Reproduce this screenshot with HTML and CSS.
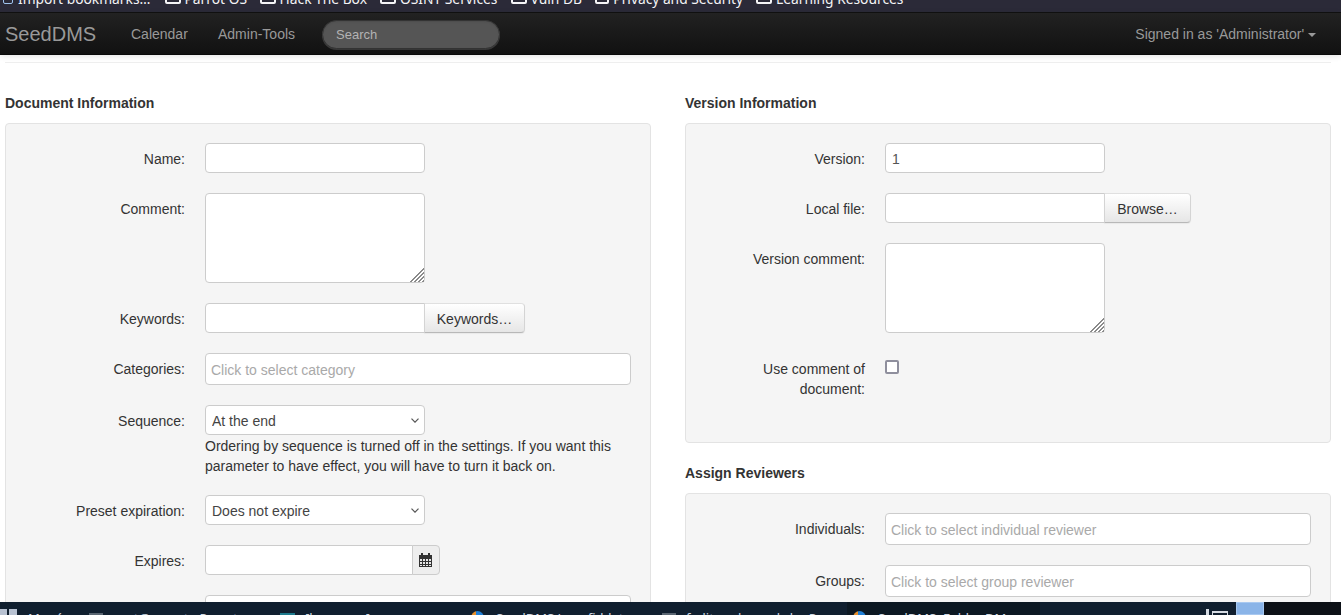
FILE: index.html
```html
<!DOCTYPE html>
<html>
<head>
    <title>SeedDMS</title>
    <link rel="stylesheet" href="styles.css">
</head>
<body>
    <!-- browser bookmarks, mostly scrolled off -->
    <div class="bookmarks">
        <span class="bm-item bm-first"><span class="bm-import"></span>Import bookmarks…</span>
        <span class="bm-item bm-parrot"><span class="bm-folder"></span>Parrot OS</span>
        <span class="bm-item bm-htb"><span class="bm-folder"></span>Hack The Box</span>
        <span class="bm-item bm-osint"><span class="bm-folder"></span>OSINT Services</span>
        <span class="bm-item bm-vuln"><span class="bm-folder"></span>Vuln DB</span>
        <span class="bm-item bm-privacy"><span class="bm-folder"></span>Privacy and Security</span>
        <span class="bm-item"><span class="bm-folder"></span>Learning Resources</span>
    </div>

    <div class="navbar">
        <a class="brand">SeedDMS</a>
        <a class="nav-link nav-calendar">Calendar</a>
        <a class="nav-link nav-admin">Admin-Tools</a>
        <input class="search" type="text" placeholder="Search">
        <a class="nav-link nav-user">Signed in as 'Administrator' <span class="caret"></span></a>
    </div>

    <div class="content">
        <hr class="rule">
        <div class="columns">
            <div class="column">
                <h4 class="box-title">Document Information</h4>
                <div class="well">
                    <div class="row">
                        <label class="row-label">Name:</label>
                        <div class="row-control"><input class="field" type="text"></div>
                    </div>
                    <div class="row">
                        <label class="row-label">Comment:</label>
                        <div class="row-control"><textarea class="field area"></textarea></div>
                    </div>
                    <div class="row">
                        <label class="row-label">Keywords:</label>
                        <div class="row-control group">
                            <input class="field joined" type="text">
                            <button class="btn keywords-btn">Keywords…</button>
                        </div>
                    </div>
                    <div class="row">
                        <label class="row-label">Categories:</label>
                        <div class="row-control"><input class="field chooser" type="text" placeholder="Click to select category"></div>
                    </div>
                    <div class="row">
                        <label class="row-label">Sequence:</label>
                        <div class="row-control">
                            <select class="field pick"><option>At the end</option></select>
                            <div class="help">Ordering by sequence is turned off in the settings. If you want this parameter to have effect, you will have to turn it back on.</div>
                        </div>
                    </div>
                    <div class="row">
                        <label class="row-label">Preset expiration:</label>
                        <div class="row-control"><select class="field pick"><option>Does not expire</option></select></div>
                    </div>
                    <div class="row">
                        <label class="row-label">Expires:</label>
                        <div class="row-control group">
                            <input class="field joined date" type="text">
                            <span class="addon">
                                <svg width="13" height="14" viewBox="0 0 13 14">
                                    <rect x="0" y="2" width="13" height="12" fill="#333"/>
                                    <rect x="2" y="0" width="2" height="4" fill="#333"/>
                                    <rect x="9" y="0" width="2" height="4" fill="#333"/>
                                    <path d="M1 6h2v2H1zM4 6h2v2H4zM7 6h2v2H7zM10 6h2v2h-2zM1 9h2v2H1zM4 9h2v2H4zM7 9h2v2H7zM10 9h2v2h-2zM1 12h2v1H1zM4 12h2v1H4zM7 12h2v1H7zM10 12h2v1h-2z" fill="#e8e8e8"/>
                                </svg>
                            </span>
                        </div>
                    </div>
                    <div class="row">
                        <label class="row-label"></label>
                        <div class="row-control"><input class="field chooser" type="text"></div>
                    </div>
                </div>
            </div>

            <div class="column">
                <h4 class="box-title">Version Information</h4>
                <div class="well">
                    <div class="row">
                        <label class="row-label">Version:</label>
                        <div class="row-control"><input class="field" type="text" value="1"></div>
                    </div>
                    <div class="row">
                        <label class="row-label">Local file:</label>
                        <div class="row-control group">
                            <input class="field joined" type="text">
                            <button class="btn browse-btn">Browse…</button>
                        </div>
                    </div>
                    <div class="row">
                        <label class="row-label">Version comment:</label>
                        <div class="row-control"><textarea class="field area"></textarea></div>
                    </div>
                    <div class="row">
                        <label class="row-label">Use comment of document:</label>
                        <div class="row-control"><input class="check" type="checkbox"></div>
                    </div>
                </div>

                <h4 class="box-title">Assign Reviewers</h4>
                <div class="well">
                    <div class="row">
                        <label class="row-label">Individuals:</label>
                        <div class="row-control"><input class="field chooser" type="text" placeholder="Click to select individual reviewer"></div>
                    </div>
                    <div class="row">
                        <label class="row-label">Groups:</label>
                        <div class="row-control"><input class="field chooser" type="text" placeholder="Click to select group reviewer"></div>
                    </div>
                </div>
            </div>
        </div>
    </div>

    <!-- desktop panel, only the top few pixels show -->
    <div class="taskbar">
        <span class="task task-menu"><span class="menu-icon"></span>Menú</span>
        <span class="task task-term"><span class="term-icon"></span>root@parrot - Parrot</span>
        <span class="task task-files"><span class="folder-icon"></span>[home - ...]</span>
        <span class="task task-fox"><span class="fox-icon"></span>SeedDMS Langfiddate</span>
        <span class="task task-term2"><span class="term-icon"></span>feditor - bpanel.sh - Parr</span>
        <span class="task task-active"><span class="fox-icon"></span>SeedDMS: Folder DM</span>
        <span class="tray-tick"></span>
        <span class="tray-icon"></span>
        <span class="tray-active"><span class="fox-icon"></span></span>
        <span class="tray-dark"></span>
    </div>
</body>
</html>
```

FILE: styles.css
```css
html, body {
    height: 100%;
}
body {
    margin: 0;
    height: 615px;
    overflow: hidden;
    display: flex;
    flex-direction: column;
    font-family: "Liberation Sans", Arial, sans-serif;
    font-size: 14px;
    line-height: 20px;
    color: #333;
    background-color: white;
}

/* bookmarks strip */
.bookmarks {
    flex: none;
    height: 13px;
    box-sizing: border-box;
    border-bottom: 1px solid #111;
    background-color: #2b2a38;
    color: #f4f4f6;
    font-family: "Noto Sans", sans-serif;
    font-size: 13.8px;
    line-height: 14px;
    display: flex;
    align-items: flex-end;
    padding: 0 0 6px 3px;
    overflow: hidden;
    white-space: nowrap;
}
.bm-item {
    display: flex;
    align-items: flex-end;
    margin-right: 13px;
    flex: none;
}
.bm-first { width: 149px; margin-right: 13px; }
.bm-parrot { width: 82px; }
.bm-htb { width: 107px; }
.bm-osint { width: 118px; }
.bm-vuln { width: 71px; }
.bm-privacy { width: 148px; }
.bm-import {
    width: 8px;
    height: 10px;
    margin: 0 5px 2px 0;
    border: 1px solid #9fc3ee;
    border-radius: 2px;
}
.bm-folder {
    width: 12px;
    height: 12px;
    margin: 0 4px 2px 0;
    border: 2px solid #f4f4f6;
    border-radius: 2px;
}

/* navbar */
.navbar {
    flex: none;
    height: 42px;
    box-sizing: border-box;
    display: flex;
    align-items: center;
    padding: 1px 25px 0 5px;
    background: linear-gradient(#222, #111);
    border-bottom: 1px solid #0a0a0a;
    box-shadow: 0 1px 6px rgba(0,0,0,0.12);
    position: relative;
}
.brand {
    font-size: 20px;
    color: #999;
    width: 126px;
}
.nav-link {
    color: #999;
}
.nav-calendar { width: 87px; }
.nav-admin { width: 104px; }
.search {
    width: 178px;
    height: 29px;
    box-sizing: border-box;
    padding: 0 13px;
    border: 1px solid #333;
    border-radius: 15px;
    background-color: #555;
    box-shadow: inset 0 1px 2px rgba(0,0,0,0.1), 0 1px 0 rgba(255,255,255,0.15);
    font: inherit;
    font-size: 13px;
    color: #ccc;
}
.search::placeholder {
    color: #b3b3b3;
    opacity: 1;
}
.nav-user {
    margin-left: auto;
    white-space: nowrap;
}
.caret {
    display: inline-block;
    vertical-align: middle;
    border-top: 4px solid #999;
    border-left: 4px solid transparent;
    border-right: 4px solid transparent;
}

/* main area */
.content {
    flex: 1;
    min-height: 0;
    overflow: hidden;
    padding: 0 10px 0 5px;
}
.rule {
    margin: 7px 0 10px;
    border: none;
    border-top: 1px solid #eee;
}
.columns {
    display: flex;
    gap: 34px;
}
.column {
    flex: 1;
    min-width: 0;
}
.box-title {
    margin: 20px 0 10px;
    font-size: 14px;
    line-height: 20px;
    font-weight: bold;
}
.well {
    box-sizing: border-box;
    padding: 19px 19px 43px 0;
    margin-bottom: 20px;
    background-color: #f5f5f5;
    border: 1px solid #e3e3e3;
    border-radius: 4px;
}
.row {
    display: flex;
    margin-bottom: 20px;
}
.well > .row:last-child {
    margin-bottom: 0;
}
.row-label {
    flex: none;
    box-sizing: border-box;
    width: 179px;
    margin-right: 20px;
    padding: 6px 0 0 50px;
    text-align: right;
}
.row-control {
    flex: 1;
    min-width: 0;
}
.group {
    display: flex;
}

/* form controls */
.field {
    display: block;
    width: 220px;
    height: 30px;
    box-sizing: border-box;
    padding: 5px 6px 3px;
    border: 1px solid #ccc;
    border-radius: 4px;
    background-color: white;
    font: inherit;
    color: #555;
    margin: 0;
}
.field::placeholder {
    color: #a9a9a9;
    opacity: 1;
}
.area {
    height: 90px;
}
.area::-webkit-resizer {
    background:
        linear-gradient(135deg, white 52%, transparent 52%),
        repeating-linear-gradient(135deg, #8a8a8a 0 1px, white 1px 2.8px);
}
.chooser {
    width: 100%;
    height: 32px;
    padding: 2px 5px 0;
}
.pick {
    appearance: none;
    color: #444;
    background-image: url("data:image/svg+xml,%3Csvg xmlns='http://www.w3.org/2000/svg' width='8' height='5'%3E%3Cpath d='M.5.7 4 4.2 7.5.7' fill='none' stroke='%23555' stroke-width='1.2'/%3E%3C/svg%3E");
    background-repeat: no-repeat;
    background-position: 205px 12px;
}
.help {
    margin-top: 1px;
    margin-bottom: -1px;
}
.joined {
    border-radius: 4px 0 0 4px;
}
.date {
    width: 208px;
}
.btn {
    height: 30px;
    box-sizing: border-box;
    margin-left: -1px;
    border: 1px solid #ccc;
    border-color: #e0e0e0 #d4d4d4 #b8b8b8;
    border-radius: 0 4px 4px 0;
    background: linear-gradient(#fff, #e6e6e6);
    box-shadow: 0 1px 1px rgba(0,0,0,0.05);
    font: inherit;
    color: #333;
    text-align: center;
    padding: 2px 0 0;
}
.keywords-btn { width: 101px; }
.browse-btn { width: 87px; }
.addon {
    box-sizing: border-box;
    width: 28px;
    height: 30px;
    margin-left: -1px;
    padding-right: 1px;
    border: 1px solid #ccc;
    border-radius: 0 4px 4px 0;
    background-color: #eee;
    display: flex;
    align-items: center;
    justify-content: center;
}
.check {
    appearance: none;
    display: block;
    box-sizing: border-box;
    width: 14px;
    height: 14px;
    margin: 7px 0 0 0;
    border: 2px solid #8f8f9d;
    border-radius: 2px;
    background-color: white;
}

/* taskbar */
.taskbar {
    flex: none;
    height: 13px;
    background-color: #101f2f;
    color: #cfd8e3;
    font-family: "Noto Sans", sans-serif;
    font-size: 13px;
    line-height: 18px;
    display: flex;
    overflow: hidden;
    white-space: nowrap;
}
.task {
    flex: none;
    display: flex;
    padding-top: 7px;
    box-sizing: border-box;
    height: 30px;
}
.task-menu { width: 89px; }
.task-term { width: 191px; }
.task-files { width: 190px; }
.task-fox { width: 192px; }
.task-term2 { width: 185px; }
.task-active {
    width: 193px;
    padding-left: 5px;
    background-color: #0c1822;
}
.menu-icon {
    width: 17px;
    height: 20px;
    margin: 0 11px 0 0;
    background: linear-gradient(90deg, #b8c2d2 7px, transparent 7px, transparent 9px, #b8c2d2 9px);
}
.term-icon {
    width: 14px;
    height: 14px;
    margin: 4px 10px 0 0;
    background-color: #5a6672;
}
.folder-icon {
    width: 15px;
    height: 14px;
    margin: 4px 10px 0 0;
    background-color: #1d7a8c;
}
.fox-icon {
    flex: none;
    width: 13px;
    height: 14px;
    margin: 2px 12px 0 1px;
    border-radius: 50%;
    background: linear-gradient(90deg, #e8912d 40%, #1f7fd6 40%);
}
.tray-tick {
    flex: none;
    width: 3px;
    height: 8px;
    margin: 7px 3px 0 auto;
    background-color: #d5dbe3;
}
.tray-icon {
    flex: none;
    width: 16px;
    height: 8px;
    margin: 9px 8px 0 0;
    box-sizing: border-box;
    border: 1px solid #d5dbe3;
    border-top-width: 2px;
}
.tray-active {
    flex: none;
    box-sizing: border-box;
    width: 28px;
    padding: 7px 0 0 4px;
    background-color: #8ab4e8;
    border: 1px solid #a8c8f0;
}
.tray-dark {
    flex: none;
    width: 77px;
    background-color: #0d1117;
}
```
